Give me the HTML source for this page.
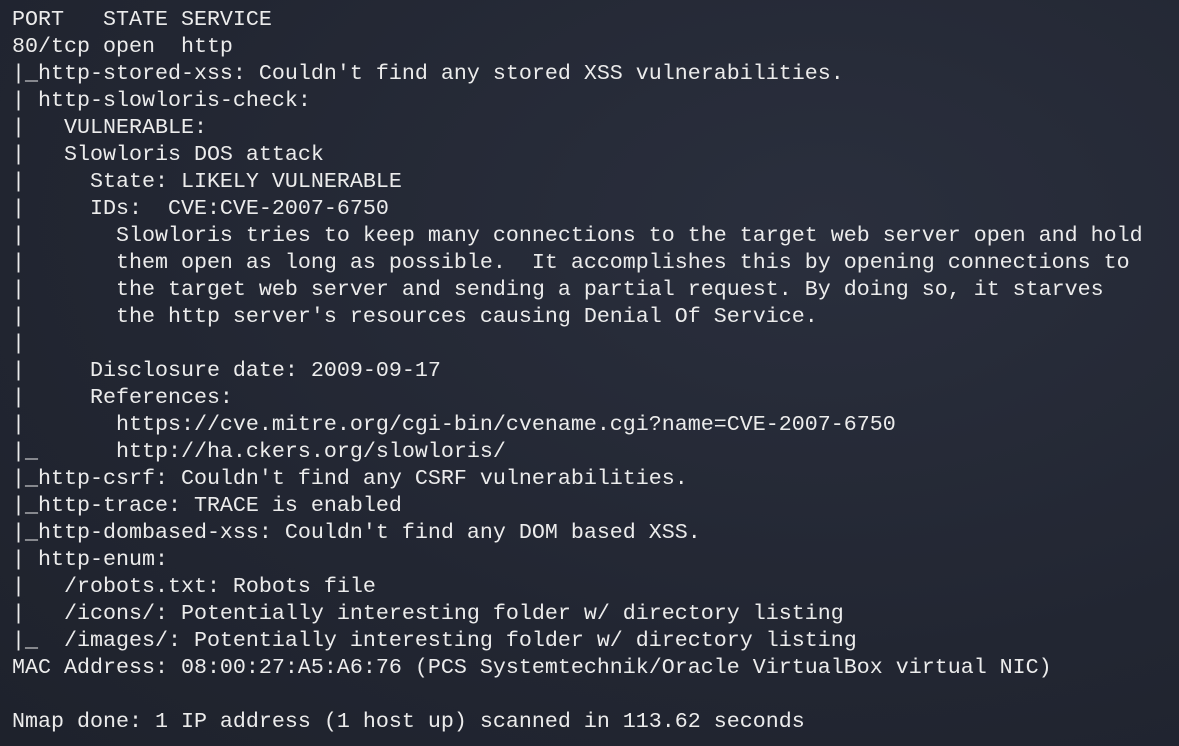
<!DOCTYPE html>
<html><head><meta charset="utf-8"><style>
html,body{margin:0;padding:0;}
body{width:1179px;height:746px;overflow:hidden;background:#232733;
background:radial-gradient(ellipse at 70% 30%,#2a2f3d 0%,#222632 60%,#1e222c 100%);}
pre{margin:0;padding:6px 0 0 12px;font-family:"Liberation Mono","DejaVu Sans Mono",monospace;font-size:21.67px;line-height:27px;color:#ececec;}
</style></head><body><pre>PORT   STATE SERVICE
80/tcp open  http
|_http-stored-xss: Couldn't find any stored XSS vulnerabilities.
| http-slowloris-check: 
|   VULNERABLE:
|   Slowloris DOS attack
|     State: LIKELY VULNERABLE
|     IDs:  CVE:CVE-2007-6750
|       Slowloris tries to keep many connections to the target web server open and hold
|       them open as long as possible.  It accomplishes this by opening connections to
|       the target web server and sending a partial request. By doing so, it starves
|       the http server's resources causing Denial Of Service.
|       
|     Disclosure date: 2009-09-17
|     References:
|       https://cve.mitre.org/cgi-bin/cvename.cgi?name=CVE-2007-6750
|_      http://ha.ckers.org/slowloris/
|_http-csrf: Couldn't find any CSRF vulnerabilities.
|_http-trace: TRACE is enabled
|_http-dombased-xss: Couldn't find any DOM based XSS.
| http-enum: 
|   /robots.txt: Robots file
|   /icons/: Potentially interesting folder w/ directory listing
|_  /images/: Potentially interesting folder w/ directory listing
MAC Address: 08:00:27:A5:A6:76 (PCS Systemtechnik/Oracle VirtualBox virtual NIC)

Nmap done: 1 IP address (1 host up) scanned in 113.62 seconds</pre></body></html>
